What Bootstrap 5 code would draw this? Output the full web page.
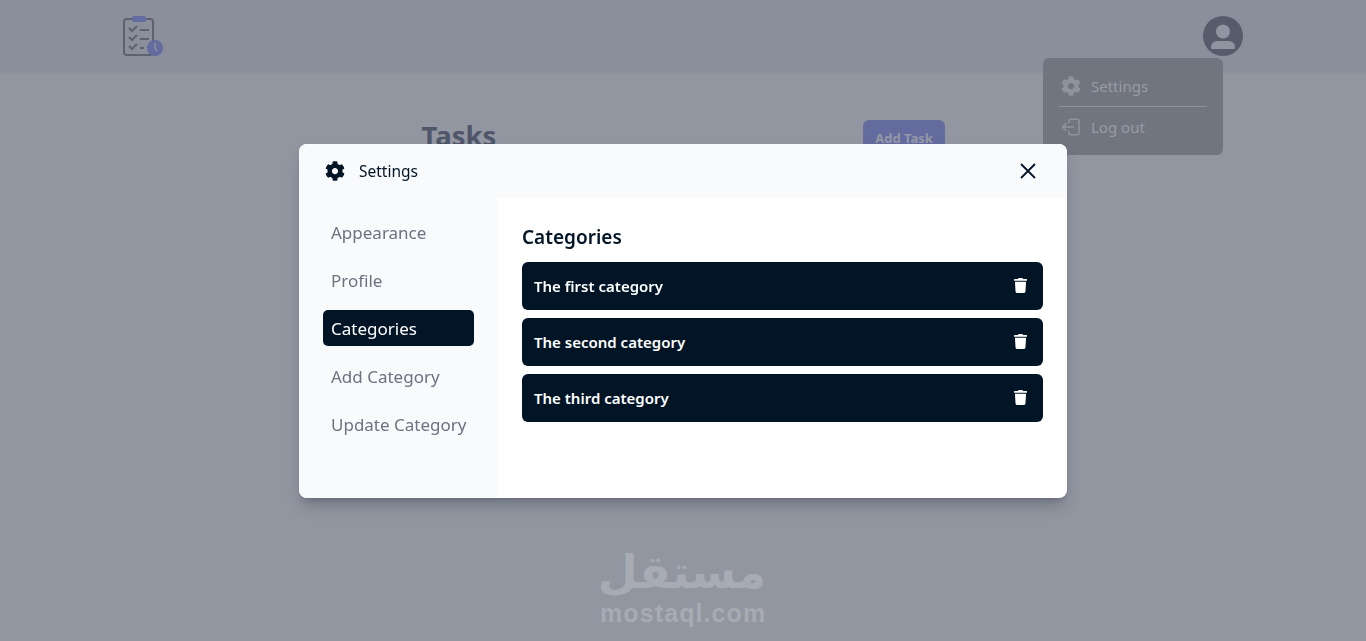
<!DOCTYPE html>
<html lang="en">
<head>
  <meta charset="UTF-8" />
  <title>Tasks</title>
  <link href="https://cdn.jsdelivr.net/npm/bootstrap@5.3.0/dist/css/bootstrap.min.css" rel="stylesheet">
  <style>
    body {
      background: #9296a1;
      font-family: "Noto Sans", sans-serif;
      height: 641px;
      overflow: hidden;
    }

    .top-bar {
      height: 72px;
      background: #8a8f9b;
      box-shadow: 0 1px 2px rgba(70, 75, 90, 0.1);
    }

    .top-inner {
      width: 1120px;
      position: relative;
    }

    .profile-menu {
      position: absolute;
      top: 42px;
      right: 20px;
      width: 180px;
      height: 97px;
      margin-top: 1px;
      padding: 11px 16px 0;
      background: #71757f;
      border-radius: 6px;
      color: #989ca6;
      font-size: 15px;
      z-index: 2;
    }

    .menu-row {
      height: 34px;
      padding-left: 2px;
      gap: 10px;
    }

    .menu-rule {
      border-top: 1px solid #8f939d;
      margin: 3px 0;
    }

    .task-head {
      width: 523px;
      margin-top: 48px;
    }

    .task-title {
      font-size: 27.5px;
      font-weight: 700;
      color: #50566a;
      margin: -1px 0 0;
    }

    .add-btn {
      width: 82px;
      height: 38px;
      padding: 0 0 0 1px;
      background: #646b9f;
      color: #9599a6;
      font-size: 13px;
      font-weight: 700;
      border: 0;
      border-radius: 6px;
    }

    .watermark {
      position: absolute;
      left: 600px;
      top: 544px;
      width: 166px;
      color: #a7abb4;
      text-align: center;
      white-space: nowrap;
    }

    .watermark-ar {
      font-family: "DejaVu Sans", sans-serif;
      font-weight: 700;
      font-size: 46px;
      line-height: 57px;
    }

    .watermark-en {
      font-family: "Liberation Sans", sans-serif;
      font-weight: 700;
      font-size: 25px;
      line-height: 24px;
      letter-spacing: 1.1px;
    }

    .settings-layer {
      position: fixed;
      inset: 0;
      z-index: 5;
    }

    .settings-box {
      width: 768px;
      height: 354px;
      background: #fff;
      border-radius: 8px;
      overflow: hidden;
      box-shadow: 0 10px 15px -3px rgba(40, 45, 60, 0.3), 0 4px 6px -4px rgba(40, 45, 60, 0.3);
    }

    .settings-head {
      height: 54px;
      padding: 0 26px;
      background: #f9fafc;
      color: #021526;
      font-size: 15.5px;
    }

    .head-label {
      gap: 14px;
    }

    .head-label span {
      padding-top: 2px;
    }

    .settings-side {
      width: 199px;
      padding: 16px 24px;
      background: #f9fafc;
      gap: 12px;
    }

    .side-link {
      height: 36px;
      padding: 2px 8px 0;
      border-radius: 5px;
      color: #6b7280;
      font-size: 17px;
      white-space: nowrap;
    }

    .side-link.current {
      background: #021526;
      color: #fff;
    }

    .settings-main {
      padding: 24px;
    }

    .main-title {
      font-size: 19px;
      font-weight: 600;
      line-height: 30px;
      color: #021526;
      margin: 0 0 10px;
    }

    .cat-row {
      height: 48px;
      padding: 0 16px 0 12px;
      background: #021526;
      border-radius: 6px;
      color: #fff;
      font-size: 15px;
      font-weight: 600;
    }

    .cat-row span {
      padding-top: 2px;
    }

    .close-x {
      background: none;
      border: 0;
      padding: 0;
      margin-right: 5px;
      line-height: 0;
    }
  </style>
</head>
<body>
  <header class="top-bar d-flex justify-content-center align-items-center">
    <div class="top-inner d-flex justify-content-between align-items-center">
      <svg width="40" height="42" viewBox="0 0 40 42" fill="none">
        <rect x="1" y="4" width="29" height="36" rx="3" stroke="#5d6272" stroke-width="2"/>
        <rect x="9" y="1" width="14" height="6" rx="2" fill="#646b9f"/>
        <path d="M6 13l3 3 5-5M6 22l3 3 5-5M6 31l3 3 5-5" stroke="#5d6272" stroke-width="2"/>
        <path d="M17 15h9M17 24h9M17 33h4" stroke="#5d6272" stroke-width="2"/>
        <circle cx="32" cy="33" r="8" fill="#646b9f"/>
        <path d="M32 28v5l2 3" stroke="#8a8f9b" stroke-width="1.6"/>
      </svg>
      <svg width="40" height="40" viewBox="0 0 40 40">
        <circle cx="20" cy="20" r="20" fill="#575c6c"/>
        <circle cx="20" cy="15.500" r="7" fill="#8f94a0"/>
        <path d="M8 32c0-6 4-7 7-7h10c3 0 7 1 7 7 0 1-1 1-2 1H10c-1 0-2 0-2-1z" fill="#8f94a0"/>
      </svg>
      <div class="profile-menu">
        <div class="menu-row d-flex align-items-center">
          <svg width="20" height="20" viewBox="0 0 512 512" fill="#8f939d"><path d="M487.4 315.7l-42.6-24.6c4.3-23.2 4.3-47 0-70.2l42.6-24.6c4.9-2.8 7.1-8.6 5.5-14-11.1-35.6-30-67.8-54.7-94.6-3.8-4.1-10-5.1-14.8-2.3L380.8 110c-17.9-15.4-38.5-27.3-60.8-35.1V25.8c0-5.6-3.9-10.5-9.4-11.7-36.7-8.2-74.3-7.8-109.2 0-5.5 1.2-9.4 6.1-9.4 11.7V75c-22.2 7.9-42.8 19.8-60.8 35.1L88.7 85.5c-4.9-2.8-11-1.9-14.8 2.3-24.7 26.7-43.6 58.9-54.7 94.6-1.7 5.4.6 11.2 5.5 14L67.3 221c-4.3 23.2-4.3 47 0 70.2l-42.6 24.6c-4.9 2.8-7.1 8.6-5.5 14 11.1 35.6 30 67.8 54.7 94.6 3.8 4.1 10 5.1 14.8 2.3l42.6-24.6c17.9 15.4 38.5 27.3 60.8 35.1v49.2c0 5.6 3.9 10.5 9.4 11.7 36.7 8.2 74.3 7.8 109.2 0 5.5-1.2 9.4-6.1 9.4-11.7v-49.2c22.2-7.9 42.8-19.8 60.8-35.1l42.6 24.6c4.9 2.8 11 1.9 14.8-2.3 24.7-26.7 43.6-58.9 54.7-94.6 1.5-5.5-.7-11.3-5.6-14.1zM256 336c-44.1 0-80-35.9-80-80s35.9-80 80-80 80 35.9 80 80-35.9 80-80 80z"/></svg>
          <span>Settings</span>
        </div>
        <div class="menu-rule"></div>
        <div class="menu-row d-flex align-items-center">
          <svg width="20" height="20" viewBox="0 0 20 20" fill="none" stroke="#8f939d" stroke-width="1.6"><path d="M8 6V3.500c0-.8.5-1.300 1.300-1.300h7.400c.8 0 1.300.5 1.300 1.300v13c0 .8-.5 1.300-1.300 1.300H9.300c-.8 0-1.300-.5-1.300-1.300V14"/><path d="M13 10H2M5.500 6L1.500 10l4 4"/></svg>
          <span>Log out</span>
        </div>
      </div>
    </div>
  </header>

  <main class="d-flex justify-content-center">
    <div class="task-head d-flex justify-content-between align-items-start">
      <h1 class="task-title">Tasks</h1>
      <button class="add-btn" type="button">Add Task</button>
    </div>
  </main>

  <div class="watermark">
    <div class="watermark-ar" lang="ar" dir="rtl">مستقل</div>
    <div class="watermark-en">mostaql.com</div>
  </div>

  <div class="settings-layer d-flex justify-content-center align-items-center">
    <div class="settings-box d-flex flex-column">
      <div class="settings-head d-flex justify-content-between align-items-center">
        <div class="head-label d-flex align-items-center">
          <svg width="20" height="20" viewBox="0 0 512 512" fill="#021526"><path d="M487.4 315.7l-42.6-24.6c4.3-23.2 4.3-47 0-70.2l42.6-24.6c4.9-2.8 7.1-8.6 5.5-14-11.1-35.6-30-67.8-54.7-94.6-3.8-4.1-10-5.1-14.8-2.3L380.8 110c-17.9-15.4-38.5-27.3-60.8-35.1V25.8c0-5.6-3.9-10.5-9.4-11.7-36.7-8.2-74.3-7.8-109.2 0-5.5 1.2-9.4 6.1-9.4 11.7V75c-22.2 7.9-42.8 19.8-60.8 35.1L88.7 85.5c-4.9-2.8-11-1.9-14.8 2.3-24.7 26.7-43.6 58.9-54.7 94.6-1.7 5.4.6 11.2 5.5 14L67.3 221c-4.3 23.2-4.3 47 0 70.2l-42.6 24.6c-4.9 2.8-7.1 8.6-5.5 14 11.1 35.6 30 67.8 54.7 94.6 3.8 4.1 10 5.1 14.8 2.3l42.6-24.6c17.9 15.4 38.5 27.3 60.8 35.1v49.2c0 5.6 3.9 10.5 9.4 11.7 36.7 8.2 74.3 7.8 109.2 0 5.5-1.2 9.4-6.1 9.4-11.7v-49.2c22.2-7.9 42.8-19.8 60.8-35.1l42.6 24.6c4.9 2.8 11 1.9 14.8-2.3 24.7-26.7 43.6-58.9 54.7-94.6 1.5-5.5-.7-11.3-5.6-14.1zM256 336c-44.1 0-80-35.9-80-80s35.9-80 80-80 80 35.9 80 80-35.9 80-80 80z"/></svg>
          <span>Settings</span>
        </div>
        <button class="close-x" type="button" aria-label="Close">
          <svg width="16" height="16" viewBox="0 0 16 16" fill="none" stroke="#021526" stroke-width="1.800"><path d="M1 1l14 14M15 1L1 15"/></svg>
        </button>
      </div>
      <div class="d-flex flex-grow-1">
        <nav class="settings-side d-flex flex-column">
          <div class="side-link d-flex align-items-center">Appearance</div>
          <div class="side-link d-flex align-items-center">Profile</div>
          <div class="side-link current d-flex align-items-center">Categories</div>
          <div class="side-link d-flex align-items-center">Add Category</div>
          <div class="side-link d-flex align-items-center">Update Category</div>
        </nav>
        <section class="settings-main flex-grow-1">
          <h2 class="main-title">Categories</h2>
          <div class="d-flex flex-column gap-2">
            <div class="cat-row d-flex justify-content-between align-items-center">
              <span>The first category</span>
              <svg width="13" height="15" viewBox="0 0 448 512" fill="#fff"><path d="M432 32H312l-9.400-18.700A24 24 0 0 0 281.100 0H166.800a23.720 23.720 0 0 0-21.400 13.300L136 32H16A16 16 0 0 0 0 48v32a16 16 0 0 0 16 16h416a16 16 0 0 0 16-16V48a16 16 0 0 0-16-16zM53.200 467a48 48 0 0 0 47.900 45h245.800a48 48 0 0 0 47.900-45L416 128H32z"/></svg>
            </div>
            <div class="cat-row d-flex justify-content-between align-items-center">
              <span>The second category</span>
              <svg width="13" height="15" viewBox="0 0 448 512" fill="#fff"><path d="M432 32H312l-9.400-18.700A24 24 0 0 0 281.100 0H166.800a23.720 23.720 0 0 0-21.400 13.300L136 32H16A16 16 0 0 0 0 48v32a16 16 0 0 0 16 16h416a16 16 0 0 0 16-16V48a16 16 0 0 0-16-16zM53.200 467a48 48 0 0 0 47.900 45h245.800a48 48 0 0 0 47.900-45L416 128H32z"/></svg>
            </div>
            <div class="cat-row d-flex justify-content-between align-items-center">
              <span>The third category</span>
              <svg width="13" height="15" viewBox="0 0 448 512" fill="#fff"><path d="M432 32H312l-9.400-18.700A24 24 0 0 0 281.100 0H166.800a23.720 23.720 0 0 0-21.400 13.300L136 32H16A16 16 0 0 0 0 48v32a16 16 0 0 0 16 16h416a16 16 0 0 0 16-16V48a16 16 0 0 0-16-16zM53.200 467a48 48 0 0 0 47.900 45h245.800a48 48 0 0 0 47.900-45L416 128H32z"/></svg>
            </div>
          </div>
        </section>
      </div>
    </div>
  </div>

  <script src="https://cdn.jsdelivr.net/npm/bootstrap@5.3.0/dist/js/bootstrap.bundle.min.js"></script>
</body>
</html>
